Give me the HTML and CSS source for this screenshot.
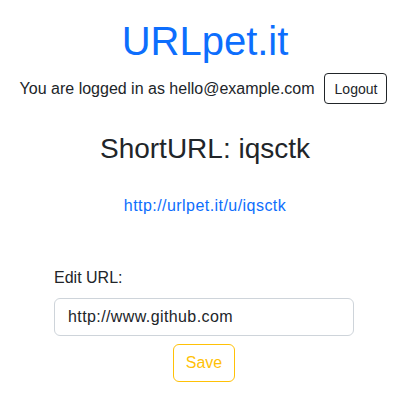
FILE: index.html
```html
<!DOCTYPE html>
<html lang="en">
<head>
<meta charset="utf-8">
<title>URLpet.it</title>
<link rel="stylesheet" href="styles.css">
</head>
<body>
<main class="page">
  <h1 class="brand">URLpet.it</h1>
  <div class="session">
    <span class="session-text">You are logged in as hello@example.com</span>
    <button class="btn btn-logout" type="button">Logout</button>
  </div>
  <h3 class="short-title">ShortURL: iqsctk</h3>
  <a class="short-link" href="#">http://urlpet.it/u/iqsctk</a>
  <form class="edit-form">
    <label class="form-label" for="url">Edit URL:</label>
    <input class="form-control" id="url" type="text" value="http://www.github.com">
    <button class="btn btn-save" type="button">Save</button>
  </form>
</main>
</body>
</html>
```

FILE: styles.css
```css
* { box-sizing: border-box; }
html, body { margin: 0; padding: 0; background: #fff; }
body {
  font-family: "Liberation Sans", Arial, Helvetica, sans-serif;
  font-size: 16px;
  line-height: 1.5;
  color: #212529;
}
.page {
  display: flex;
  flex-direction: column;
  align-items: center;
  padding-top: 17px;
}
.brand {
  margin: 0 0 8px;
  font-size: 40px;
  font-weight: 400;
  line-height: 1.2;
  color: #0d6efd;
}
.session {
  display: flex;
  align-items: center;
  gap: 9px;
  margin-right: 3px;
}
.btn {
  font-family: inherit;
  background: #fff;
  cursor: pointer;
}
.btn-logout {
  height: 31px;
  padding: 0 9px 0 10px;
  font-size: 14px;
  color: #212529;
  border: 1px solid #212529;
  border-radius: 4px;
}
.short-title {
  margin: 28px 0 0;
  font-size: 28px;
  font-weight: 400;
  line-height: 1.2;
}
.short-link {
  margin-top: 28px;
  color: #0d6efd;
  text-decoration: none;
  letter-spacing: 0.45px;
}
.edit-form {
  width: 300px;
  margin-top: 48px;
  margin-right: 2px;
  display: flex;
  flex-direction: column;
  align-items: center;
}
.form-label {
  align-self: flex-start;
  margin-bottom: 8px;
}
.form-control {
  width: 100%;
  height: 38px;
  padding: 6px 13px;
  font-family: inherit;
  font-size: 16px;
  letter-spacing: 0.4px;
  color: #212529;
  border: 1px solid #ced4da;
  border-radius: 6px;
}
.btn-save {
  margin-top: 8px;
  height: 38px;
  padding: 0 12px;
  font-size: 16px;
  color: #ffc107;
  border: 1px solid #ffc107;
  border-radius: 6px;
}
```
